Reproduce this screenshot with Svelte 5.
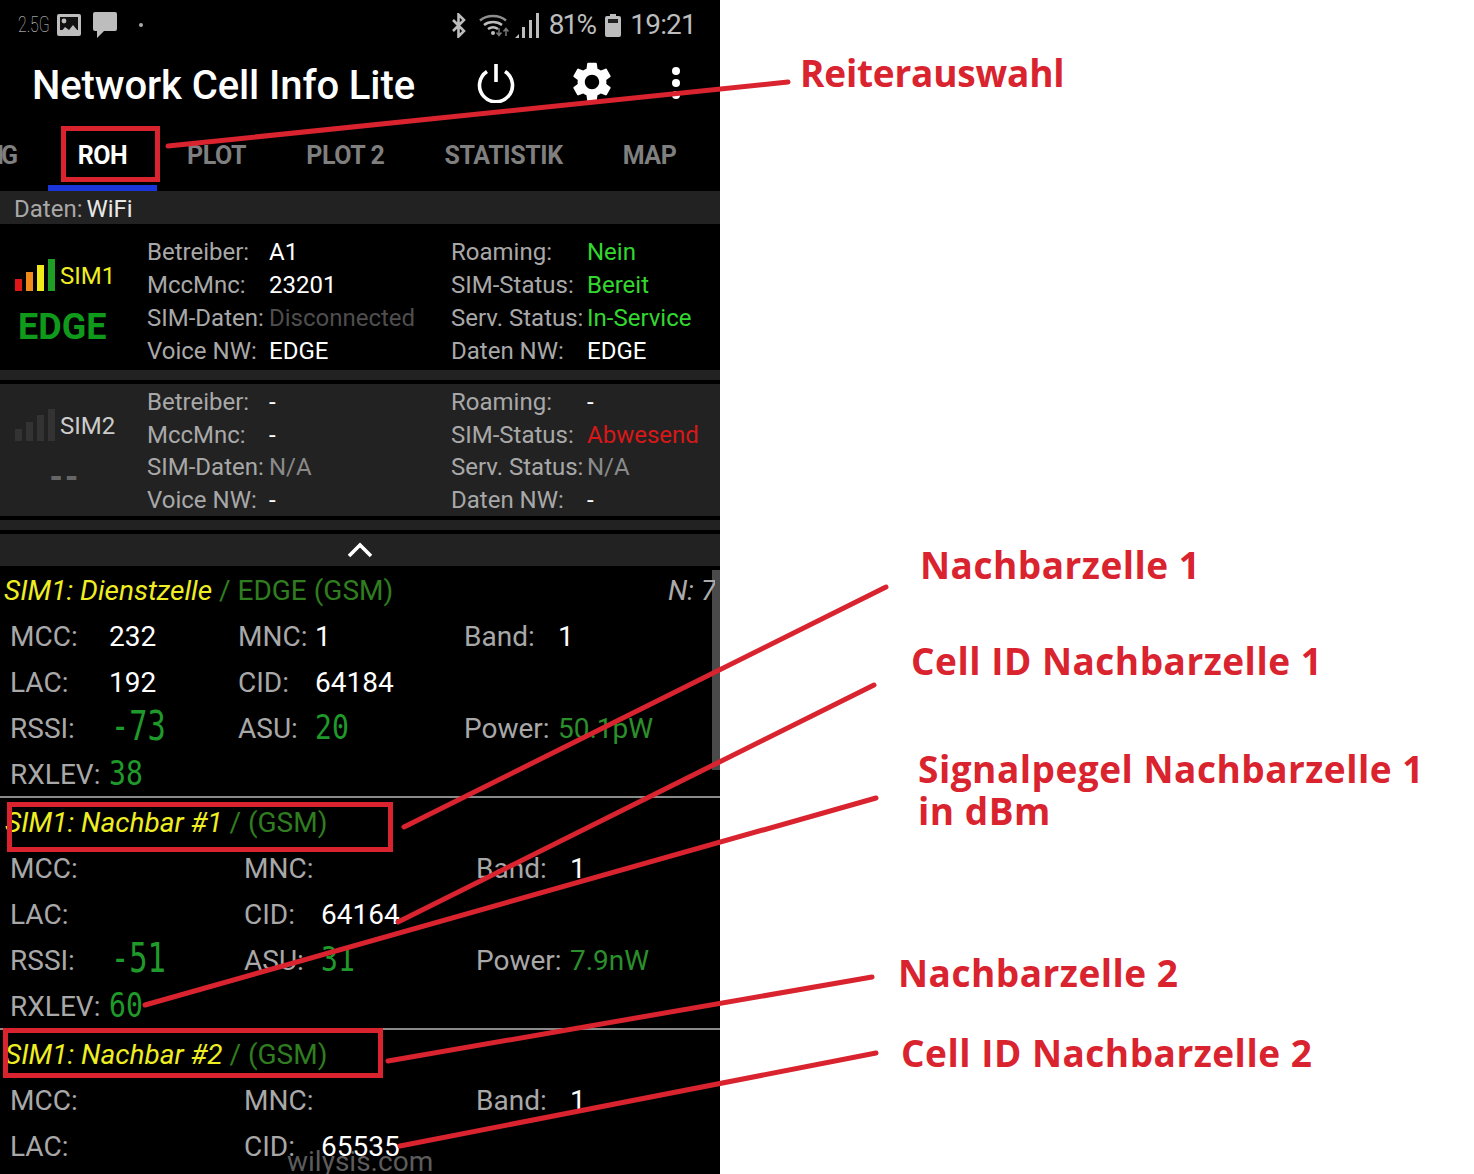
<script>
  const tabs = ['ROH', 'PLOT', 'PLOT 2', 'STATISTIK', 'MAP'];
  const sim1 = [
    ['Betreiber:', 'A1', 'val', 'Roaming:', 'Nein', 'ok'],
    ['MccMnc:', '23201', 'val', 'SIM-Status:', 'Bereit', 'ok'],
    ['SIM-Daten:', 'Disconnected', 'off', 'Serv. Status:', 'In-Service', 'ok'],
    ['Voice NW:', 'EDGE', 'val', 'Daten NW:', 'EDGE', 'val']
  ];
  const sim2 = [
    ['Betreiber:', '-', 'val', 'Roaming:', '-', 'val'],
    ['MccMnc:', '-', 'val', 'SIM-Status:', 'Abwesend', 'bad'],
    ['SIM-Daten:', 'N/A', 'na', 'Serv. Status:', 'N/A', 'na'],
    ['Voice NW:', '-', 'val', 'Daten NW:', '-', 'val']
  ];
  const cells = [
    { kind: 'serving', head: 'SIM1: Dienstzelle', tech: ' / EDGE (GSM)', n: 'N: 7',
      rows: [
        [['MCC:', '232'], ['MNC:', '1'], ['Band:', '1']],
        [['LAC:', '192'], ['CID:', '64184'], null],
        [['RSSI:', '-73', 'seg big'], ['ASU:', '20', 'seg'], ['Power:', '50.1pW', 'pw']],
        [['RXLEV:', '38', 'seg'], null, null]
      ] },
    { kind: 'near', head: 'SIM1: Nachbar #1', tech: ' / (GSM)',
      rows: [
        [['MCC:', ''], ['MNC:', ''], ['Band:', '1']],
        [['LAC:', ''], ['CID:', '64164'], null],
        [['RSSI:', '-51', 'seg big'], ['ASU:', '31', 'seg'], ['Power:', '7.9nW', 'pw']],
        [['RXLEV:', '60', 'seg'], null, null]
      ] },
    { kind: 'near', head: 'SIM1: Nachbar #2', tech: ' / (GSM)',
      rows: [
        [['MCC:', ''], ['MNC:', ''], ['Band:', '1']],
        [['LAC:', ''], ['CID:', '65535'], null]
      ] }
  ];
  const notes = [
    ['Reiterauswahl', 800, 51, 'tight'],
    ['Nachbarzelle 1', 920, 543, ''],
    ['Cell ID Nachbarzelle 1', 911, 639, ''],
    ['Signalpegel Nachbarzelle 1', 918, 747, ''],
    ['in dBm', 918, 789, ''],
    ['Nachbarzelle 2', 898, 951, ''],
    ['Cell ID Nachbarzelle 2', 901, 1031, '']
  ];
  const lines = [
    [168, 146, 788, 82],
    [404, 827, 886, 587],
    [398, 922, 874, 685],
    [145, 1005, 876, 798],
    [388, 1061, 872, 977],
    [400, 1146, 876, 1053]
  ];
  const boxes = [
    [63.5, 128.5, 94, 51],
    [9.5, 804.5, 381, 45],
    [5.5, 1030.5, 375, 45]
  ];
</script>

{#snippet simBlock(rows)}
  <div class="grid">
    {#each rows as r}
      <div class="srow">
        <span class="lab a">{r[0]}</span><span class="v {r[2]}">{r[1]}</span>
        <span class="lab b">{r[3]}</span><span class="v {r[5]}">{r[4]}</span>
      </div>
    {/each}
  </div>
{/snippet}

<div class="page">
  <div class="phone">
    <div class="status">
      <div class="sleft">
        <span class="g25">2.5G</span>
        <svg class="ic-img" width="24" height="22" viewBox="0 0 24 22"><rect width="24" height="22" rx="2" fill="#bdbdbd"/><rect x="3" y="3" width="18" height="13" fill="#111"/><circle cx="7" cy="7" r="2.4" fill="#bdbdbd"/><path d="M3 19l5-6 4 3 4-5 5 6v2H3z" fill="#bdbdbd"/></svg>
        <svg class="ic-msg" width="24" height="26" viewBox="0 0 24 26"><path d="M2 0h20a2 2 0 0 1 2 2v15a2 2 0 0 1-2 2H11l-7 7v-7H2a2 2 0 0 1-2-2V2a2 2 0 0 1 2-2z" fill="#bdbdbd"/></svg>
        <span class="dot"></span>
      </div>
      <div class="sright">
        <svg width="16" height="25" viewBox="0 0 16 25"><path d="M2 7l11 11-5.500 5.500V1.500L13 7 2 18" fill="none" stroke="#bdbdbd" stroke-width="2.6"/></svg>
        <svg class="wifi" width="31" height="24" viewBox="0 0 31 24"><g fill="none" stroke="#8e8e8e" stroke-width="2.4"><path d="M1 7.500c7-6 19-6 26 0"/><path d="M5 12c5-4 13-4 18 0" stroke="#bdbdbd"/><path d="M9 16c3-2.200 7-2.200 10 0" stroke="#bdbdbd"/></g><circle cx="14" cy="20" r="2" fill="#bdbdbd"/><path d="M20 15v7M17.500 19.500l2.500 3 2.500-3M27 23v-7M24.500 18.500l2.500-3 2.500 3" fill="none" stroke="#777" stroke-width="1.500"/></svg>
        <svg class="sig" width="24" height="26" viewBox="0 0 24 26"><path d="M0 26l4-4v4z" fill="#bdbdbd"/><rect x="7" y="15" width="3" height="11" fill="#bdbdbd"/><rect x="14" y="8" width="3" height="18" fill="#bdbdbd"/><rect x="21" y="1" width="3" height="25" fill="#bdbdbd"/></svg>
        <span class="stxt pct">81%</span>
        <svg class="bat" width="16" height="23" viewBox="0 0 16 23"><path d="M5 0h6v2h3a2 2 0 0 1 2 2v17a2 2 0 0 1-2 2H2a2 2 0 0 1-2-2V4a2 2 0 0 1 2-2h3z" fill="#bdbdbd"/><rect x="3" y="5" width="10" height="4" fill="#222"/></svg>
        <span class="stxt clock">19:21</span>
      </div>
    </div>

    <div class="appbar">
      <span class="title">Network Cell Info Lite</span>
      <svg class="power" width="40" height="40" viewBox="0 0 40 40"><path d="M11 8.500a16.500 16.500 0 1 0 18 0" fill="none" stroke="#fff" stroke-width="3.600"/><path d="M20 1v18" stroke="#fff" stroke-width="3.600"/></svg>
      <svg class="gear" width="48" height="48" viewBox="0 0 24 24"><path fill="#fff" d="M19.140 12.940c.04-.3.06-.61.06-.94 0-.32-.02-.64-.07-.94l2.030-1.580c.18-.14.23-.41.12-.61l-1.920-3.320c-.12-.22-.37-.29-.59-.22l-2.390.96c-.5-.38-1.030-.7-1.620-.94l-.36-2.540c-.04-.24-.24-.41-.48-.41h-3.840c-.24 0-.43.17-.47.41l-.36 2.540c-.59.24-1.130.57-1.620.94l-2.390-.96c-.22-.08-.47 0-.59.22L2.740 8.870c-.12.21-.08.47.12.61l2.030 1.580c-.05.3-.09.63-.09.94s.02.64.07.94l-2.030 1.580c-.18.14-.23.41-.12.61l1.920 3.320c.12.22.37.29.59.22l2.390-.96c.5.38 1.030.7 1.620.94l.36 2.540c.05.24.24.41.48.41h3.840c.24 0 .44-.17.47-.41l.36-2.540c.59-.24 1.130-.56 1.620-.94l2.390.96c.22.08.47 0 .59-.22l1.920-3.320c.12-.22.07-.47-.12-.61l-2.010-1.580zM12 15.600c-1.980 0-3.600-1.620-3.600-3.600s1.620-3.600 3.600-3.600 3.600 1.620 3.600 3.600-1.620 3.600-3.600 3.600z"/></svg>
      <svg class="more" width="10" height="34" viewBox="0 0 10 34"><circle cx="5" cy="5" r="4" fill="#fff"/><circle cx="5" cy="17" r="4" fill="#fff"/><circle cx="5" cy="29" r="4" fill="#fff"/></svg>
    </div>

    <div class="tabs">
      <span class="tab first">IG</span>
      {#each tabs as t, i}
        <span class="tab" class:on={i === 0}>{t}</span>
      {/each}
    </div>

    <div class="data"><span class="lab">Daten:</span> <span class="wifi-v">WiFi</span></div>

    <section class="sim one">
      <div class="simleft">
        <div class="simtop">
          <svg width="40" height="32" viewBox="0 0 40 32"><rect y="20" width="7" height="12" fill="#e01616"/><rect x="11" y="13" width="7" height="19" fill="#ef8a1b"/><rect x="22" y="6" width="7" height="26" fill="#f0ea1a"/><rect x="33" y="0" width="7" height="32" fill="#1e9e22"/></svg>
          <span class="simname y">SIM1</span>
        </div>
        <div class="net">EDGE</div>
      </div>
      {@render simBlock(sim1)}
    </section>
    <div class="sep"></div>
    <section class="sim two">
      <div class="simleft">
        <div class="simtop">
          <svg width="40" height="32" viewBox="0 0 40 32"><rect y="20" width="7" height="12" fill="#333"/><rect x="11" y="13" width="7" height="19" fill="#333"/><rect x="22" y="6" width="7" height="26" fill="#333"/><rect x="33" y="0" width="7" height="32" fill="#333"/></svg>
          <span class="simname">SIM2</span>
        </div>
        <div class="net none">--</div>
      </div>
      {@render simBlock(sim2)}
    </section>
    <div class="sep2"></div>
    <div class="collapse">
      <svg width="26" height="16" viewBox="0 0 26 16"><path d="M2 14L13 3l11 11" fill="none" stroke="#fff" stroke-width="3.600"/></svg>
    </div>

    <div class="cells">
      <div class="thumb"></div>
      {#each cells as c}
        <section class="cell {c.kind}">
          <div class="chead"><em>{c.head}</em><span class="tech">{c.tech}</span>{#if c.n}<em class="n">{c.n}</em>{/if}</div>
          {#each c.rows as r}
            <div class="crow">
              {#each r as f, i}
                <div class="cf f{i}">
                  {#if f}
                    <span class="lab">{f[0]}</span><span class="v {f[2] ?? ''}">{f[1]}</span>
                  {/if}
                </div>
              {/each}
            </div>
          {/each}
        </section>
      {/each}
    </div>
    <div class="mark">wilysis.com</div>
  </div>

  <svg class="arrows" width="1474" height="1174" viewBox="0 0 1474 1174">
    {#each boxes as b}
      <rect x={b[0]} y={b[1]} width={b[2]} height={b[3]} fill="none" stroke="#d9232e" stroke-width="5"/>
    {/each}
    {#each lines as l}
      <line x1={l[0]} y1={l[1]} x2={l[2]} y2={l[3]} stroke="#d9232e" stroke-width="5" stroke-linecap="round"/>
    {/each}
  </svg>
  {#each notes as n}
    <div class="note {n[3]}" style="left:{n[1]}px;top:{n[2]}px">{n[0]}</div>
  {/each}
</div>

<style>
  :global(body) { background: #fff; }
  .page { position: relative; width: 1474px; height: 1174px; overflow: hidden; background: #fff; font-family: Roboto, "Liberation Sans", sans-serif; }
  .phone { position: relative; width: 720px; height: 1174px; overflow: hidden; background: #000; display: flex; flex-direction: column; }

  .status { height: 50px; flex: none; display: flex; justify-content: space-between; align-items: center; color: #bdbdbd; }
  .sleft { display: flex; align-items: center; padding-left: 18px; }
  .g25 { display: block; font-size: 22px; font-weight: 100; line-height: 1; color: #ddd; width: 28px; margin-right: 11px; white-space: nowrap; transform: scaleX(0.72); transform-origin: left center; }
  .ic-msg { margin-left: 12px; }
  .dot { width: 4px; height: 4px; border-radius: 50%; background: #aaa; margin-left: 22px; }
  .sright { display: flex; align-items: center; padding-right: 24px; }
  .wifi { margin-left: 12px; }
  .sig { margin-left: 5px; }
  .stxt { font-size: 28px; font-weight: 400; color: #bdbdbd; letter-spacing: -0.8px; line-height: 1; }
  .pct { margin-left: 10px; letter-spacing: -1.8px; }
  .bat { margin-left: 10px; }
  .clock { margin-left: 9px; }

  .appbar { height: 70px; flex: none; display: flex; align-items: center; padding-left: 32px; }
  .title { font-size: 40px; font-weight: 500; color: #fff; width: 444px; white-space: nowrap; flex: none; letter-spacing: -0.1px; }
  .power { margin-top: -4px; flex: none; }
  .gear { margin-left: 52px; margin-top: -6px; flex: none; }
  .more { margin-left: 55px; margin-top: -4px; flex: none; }

  .tabs { height: 71px; flex: none; display: flex; overflow: hidden; }
  .tab { flex: none; padding: 0 30px; height: 65px; line-height: 71px; font-size: 25px; font-weight: 700; color: #7f7f7f; letter-spacing: -0.4px; border-bottom: 6px solid transparent; white-space: nowrap; }
  .tab.first { width: 48px; box-sizing: border-box; padding: 0 33px 0 0; display: flex; justify-content: flex-end; letter-spacing: -3px; }
  .tab.on { color: #fff; border-bottom-color: #1a35d8; width: 109px; box-sizing: content-box; padding: 0; text-align: center; }
  .tabs .tab.on + .tab { padding-left: 30px; }

  .data { height: 33px; flex: none; background: #222; padding-left: 14px; font-size: 24px; line-height: 36px; white-space: nowrap; }
  .wifi-v { color: #e8e8e8; margin-left: -2px; }
  .lab { color: #a8a8a8; }

  .sim { display: flex; flex: none; }
  .one { background: #000; height: 146px; padding-top: 11px; box-sizing: border-box; }
  .two { background: #222; height: 132px; padding-top: 2px; box-sizing: border-box; }
  .sep { height: 14px; flex: none; background: linear-gradient(#222 10px, #000 10px); }
  .sep2 { height: 18px; flex: none; background: linear-gradient(#000 4px, #222 4px, #222 14px, #000 14px); }
  .simleft { width: 147px; flex: none; padding-left: 15px; box-sizing: border-box; }
  .simtop { display: flex; align-items: flex-end; margin-top: 24px; height: 32px; }
  .two .simtop { margin-top: 23px; }
  .simname { font-size: 24px; line-height: 30px; margin-left: 5px; color: #ccc; }
  .simname.y { color: #eeee22; }
  .net { font-size: 36px; font-weight: 700; color: #109a1c; margin-top: 15px; margin-left: 3px; line-height: 42px; white-space: nowrap; }
  .net.none { color: #666; margin-top: 15px; margin-left: 34px; line-height: 42px; font-size: 32px; font-weight: 900; letter-spacing: 1px; }

  .grid { display: flex; flex-direction: column; }
  .srow { height: 33px; display: flex; align-items: center; font-size: 24px; white-space: nowrap; }
  .srow .a { width: 122px; flex: none; }
  .srow .a + .v { width: 182px; flex: none; }
  .srow .b { width: 136px; flex: none; }
  .v.val { color: #fff; }
  .v.off { color: #4e4e4e; }
  .v.na { color: #8a8a8a; }
  .v.ok { color: #32d82e; }
  .v.bad { color: #d81818; }

  .collapse { height: 32px; flex: none; background: #222; display: flex; justify-content: center; align-items: center; }
  .cells { position: relative; flex: none; }
  .thumb { position: absolute; right: 0; top: 4px; width: 8px; height: 200px; background: #4a4a4a; }

  .cell { display: flex; flex-direction: column; border-bottom: 2px solid #8a8a8a; box-sizing: border-box; height: 232px; }
  .chead { position: relative; height: 48px; flex: none; padding-left: 5px; font-size: 28px; line-height: 50px; white-space: pre; color: #eeee22; }
  .serving .chead { padding-left: 4px; }
  .tech { color: #2f7d1f; }
  .n { position: absolute; left: 668px; top: 0; color: #aaa; width: 47px; overflow: hidden; }
  .crow { height: 46px; box-sizing: border-box; padding-bottom: 2px; flex: none; display: flex; padding-left: 10px; font-size: 28px; white-space: nowrap; align-items: center; }
  .cf { display: flex; align-items: center; flex: none; }
  .cf .lab { flex: none; }
  .serving .f0 { width: 228px; }
  .serving .f1 { width: 226px; }
  .near .f0 { width: 234px; }
  .near .f1 { width: 232px; }
  .f0 .lab { width: 99px; }
  .f1 .lab { width: 77px; }
  .f2 .lab { width: 94px; }
  .crow .v { color: #fff; }
  .crow .v.seg { display: inline-block; color: #1f9a2a; font: 400 33px/1 "DejaVu Sans Mono", monospace; transform: scaleX(0.85); transform-origin: left center; margin-top: -2px; }
  .crow .v.seg.big { font-size: 41px; transform: scaleX(0.74); margin-top: -4px; margin-left: 2px; }
  .crow .v.pw { color: #2b8f2b; }

  .mark { position: absolute; left: 287px; top: 1145px; font-size: 28px; line-height: 34px; color: #5c5c5c; white-space: nowrap; }

  .arrows { position: absolute; left: 0; top: 0; pointer-events: none; }
  .note { position: absolute; font-family: "Open Sans", "DejaVu Sans", sans-serif; font-weight: 700; font-size: 37px; line-height: 44px; letter-spacing: 0.5px; color: #d9232e; white-space: nowrap; }
  .note.tight { letter-spacing: -0.2px; }
</style>
